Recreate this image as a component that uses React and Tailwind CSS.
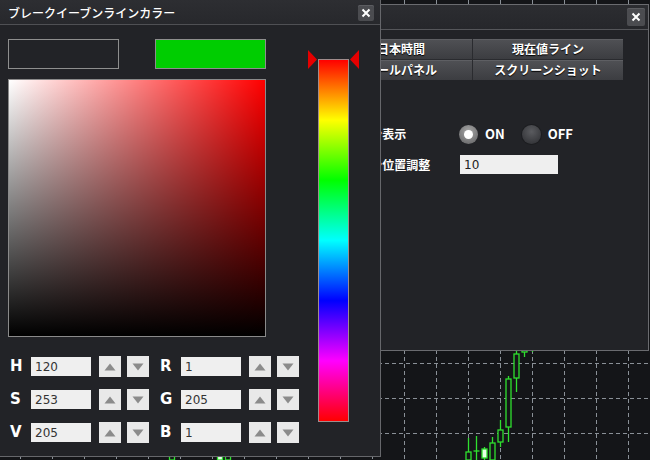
import React from "react";

const jp = { fontFamily: '"Noto Sans CJK JP", "Noto Sans", sans-serif' };
const dv = { fontFamily: '"DejaVu Sans", Verdana, sans-serif' };

const gridX = Array.from({ length: 20 }, (_, i) => 20 + i * 32);
const gridY = [293, 328, 363, 398, 433];

// x, wick top, wick bottom, body top, body bottom, filled
const candles = [
  [172, 450, 460, 454, 460, false],
  [220, 448, 460, 452, 460, true],
  [228, 450, 460, 453, 460, false],
  [468.5, 438, 460, 452, 460, false],
  [476.5, 436, 460, 451, 451, false],
  [484.5, 447, 460, 449, 458, true],
  [492.5, 437, 460, 443, 460, false],
  [500.5, 420, 447, 430, 442, false],
  [508.5, 376, 442, 379, 427, false],
  [516.5, 340, 392, 354, 378, false],
  [524.5, 340, 357, 340, 352, false],
  [532.5, 340, 352, 340, 342, false],
];

function Chart() {
  return (
    <svg className="absolute inset-0" width="650" height="460">
      <rect width="650" height="460" fill="#141518" />
      {gridX.map((x) => (
        <line key={x} x1={x + 0.5} y1="0" x2={x + 0.5} y2="460" stroke="#8a9097" strokeDasharray="4 3" />
      ))}
      {gridY.map((y) => (
        <line key={y} x1="0" y1={y + 0.5} x2="650" y2={y + 0.5} stroke="#8a9097" strokeDasharray="4 3" />
      ))}
      {candles.map(([x, wt, wb, bt, bb, filled], i) => (
        <g key={i} stroke="#2fe02f" strokeWidth="1.3">
          <line x1={x} y1={wt} x2={x} y2={wb} />
          {bb - bt < 1 ? (
            <line x1={x - 3} y1={bt} x2={x + 3} y2={bt} />
          ) : (
            <rect x={x - 2.5} y={bt} width="5" height={bb - bt} fill={filled ? "#e8ffe8" : "#141518"} />
          )}
        </g>
      ))}
    </svg>
  );
}

function CloseBtn({ size }) {
  return (
    <div
      className={`${size} flex items-center justify-center rounded-[2px] bg-[#4b4c50] shadow-[inset_0_1px_0_#5c5d61]`}
    >
      <svg width="10" height="10" viewBox="0 0 10 10">
        <path d="M1.5 1.5 L8.5 8.5 M8.5 1.5 L1.5 8.5" stroke="#fff" strokeWidth="2" />
      </svg>
    </div>
  );
}

function Arrow({ up }) {
  return (
    <div className="w-[22px] h-[21px] bg-[#e9e9e9] flex items-center justify-center">
      <svg width="12" height="8" viewBox="0 0 12 8">
        <path d={up ? "M6 0.5 L11.5 7.5 L0.5 7.5 Z" : "M0.5 0.5 L11.5 0.5 L6 7.5 Z"} fill="#8b8b8b" />
      </svg>
    </div>
  );
}

function Field({ label, value }) {
  return (
    <div className="flex items-center">
      <div className="w-[21px] text-white font-bold text-[15px] leading-none" style={dv}>
        {label}
      </div>
      <div className="w-[60px] h-[19px] bg-[#efefef] text-[#333] text-[12px] pl-[4px] flex items-center" style={dv}>
        {value}
      </div>
      <div className="ml-[8px]">
        <Arrow up />
      </div>
      <div className="ml-[6px]">
        <Arrow />
      </div>
    </div>
  );
}

const rows = [
  ["H", "120", "R", "1"],
  ["S", "253", "G", "205"],
  ["V", "205", "B", "1"],
];

const tabs = ["日本時間", "現在値ライン", "ツールパネル", "スクリーンショット"];

export default function App() {
  return (
    <div className="relative w-[650px] h-[460px] overflow-hidden bg-[#141518]">
      <Chart />

      {/* back window */}
      <div className="absolute left-[200px] top-[4px] w-[449px] h-[347px] border border-[#6a6b6f] bg-[#222327] flex flex-col">
        <div className="shrink-0 h-[25px] flex items-center justify-end pr-[3px] bg-[linear-gradient(#2c2d31,#26272b)] border-b border-[#55565a]">
          <CloseBtn size="w-[18px] h-[18px]" />
        </div>
        <div className="shrink-0 flex justify-end pr-[25px] pt-[9px]">
          <div className="grid grid-cols-[142px_150px] gap-px bg-[#2a2b2f]" style={jp}>
            {tabs.map((t) => (
              <div
                key={t}
                className="h-[20px] flex items-center justify-center text-white text-[12px] font-bold bg-[linear-gradient(#505155,#3c3d41)] shadow-[inset_0_1px_0_#5e5f63] [text-shadow:0_1px_1px_#000]"
              >
                {t}
              </div>
            ))}
          </div>
        </div>
        <div className="shrink-0 pl-[50px] mt-[44px] flex flex-col gap-[11px]" style={jp}>
          <div className="flex items-center h-[20px]">
            <div className="w-[208px] text-white text-[12px] font-bold whitespace-nowrap">ブレークイーブンライン表示</div>
            <div className="w-[19px] h-[19px] rounded-full bg-[radial-gradient(circle_at_50%_35%,#a8a8a8,#5e5e60)] flex items-center justify-center">
              <div className="w-[9px] h-[9px] rounded-full bg-white" />
            </div>
            <div className="ml-[7px] text-white text-[13px] font-bold">ON</div>
            <div className="ml-[17px] w-[19px] h-[19px] rounded-full bg-[radial-gradient(circle_at_50%_35%,#5a5b5f,#2b2c30)] shadow-[0_0_0_1px_#1c1d20]" />
            <div className="ml-[7px] text-white text-[13px] font-bold">OFF</div>
          </div>
          <div className="flex items-center h-[19px]">
            <div className="w-[209px] text-white text-[12px] font-bold whitespace-nowrap">ブレークイーブンライン位置調整</div>
            <div className="w-[98px] h-[19px] bg-[#efefef] text-[#222] text-[12px] pl-[4px] flex items-center" style={dv}>
              10
            </div>
          </div>
        </div>
      </div>

      {/* front window */}
      <div className="absolute left-[-1px] top-[-1px] w-[382px] h-[458px] border border-[#66676b] bg-[#222327] flex flex-col">
        <div className="shrink-0 h-[25px] flex items-center justify-between pl-[8px] pr-[6px] pt-px bg-[linear-gradient(#2d2e32,#27282c)] border-b border-[#4f5054]">
          <div className="text-white text-[12px] font-medium" style={jp}>
            ブレークイーブンラインカラー
          </div>
          <CloseBtn size="w-[16px] h-[16px]" />
        </div>
        <div className="shrink-0 flex pl-[8px] pt-[14px]">
          <div className="flex flex-col">
            <div className="flex gap-[36px]">
              <div className="w-[111px] h-[30px] border border-[#8e8e8e]" />
              <div className="w-[111px] h-[30px] border border-[#8e8e8e] bg-[#00cd01]" />
            </div>
            <div className="mt-[10px] w-[258px] h-[258px] border border-[#8a8a8a] bg-[#ff0000]">
              <div className="w-full h-full bg-[linear-gradient(to_right,#ffffff,rgba(255,255,255,0))]">
                <div className="w-full h-full bg-[linear-gradient(to_bottom,rgba(0,0,0,0),#000000)]" />
              </div>
            </div>
            <div className="mt-[19px] pl-[2px] flex flex-col gap-[12px]">
              {rows.map(([a, av, b, bv]) => (
                <div key={a} className="flex items-center">
                  <Field label={a} value={av} />
                  <div className="ml-[11px]">
                    <Field label={b} value={bv} />
                  </div>
                </div>
              ))}
            </div>
          </div>
          <div className="relative ml-[19px] mt-[20px] w-[31px] h-[363px] border border-[#a08c8c] bg-[linear-gradient(to_bottom,#ff0000,#ffff00,#00ff00,#00ffff,#0000ff,#ff00ff,#ff0000)]">
            <svg className="absolute left-[-11px] top-[-10px]" width="10" height="19" viewBox="0 0 10 19">
              <path d="M0 0 L9 9.5 L0 19 Z" fill="#e60000" />
            </svg>
            <svg className="absolute right-[-11px] top-[-10px]" width="10" height="19" viewBox="0 0 10 19">
              <path d="M10 0 L1 9.5 L10 19 Z" fill="#e60000" />
            </svg>
          </div>
        </div>
      </div>
    </div>
  );
}
